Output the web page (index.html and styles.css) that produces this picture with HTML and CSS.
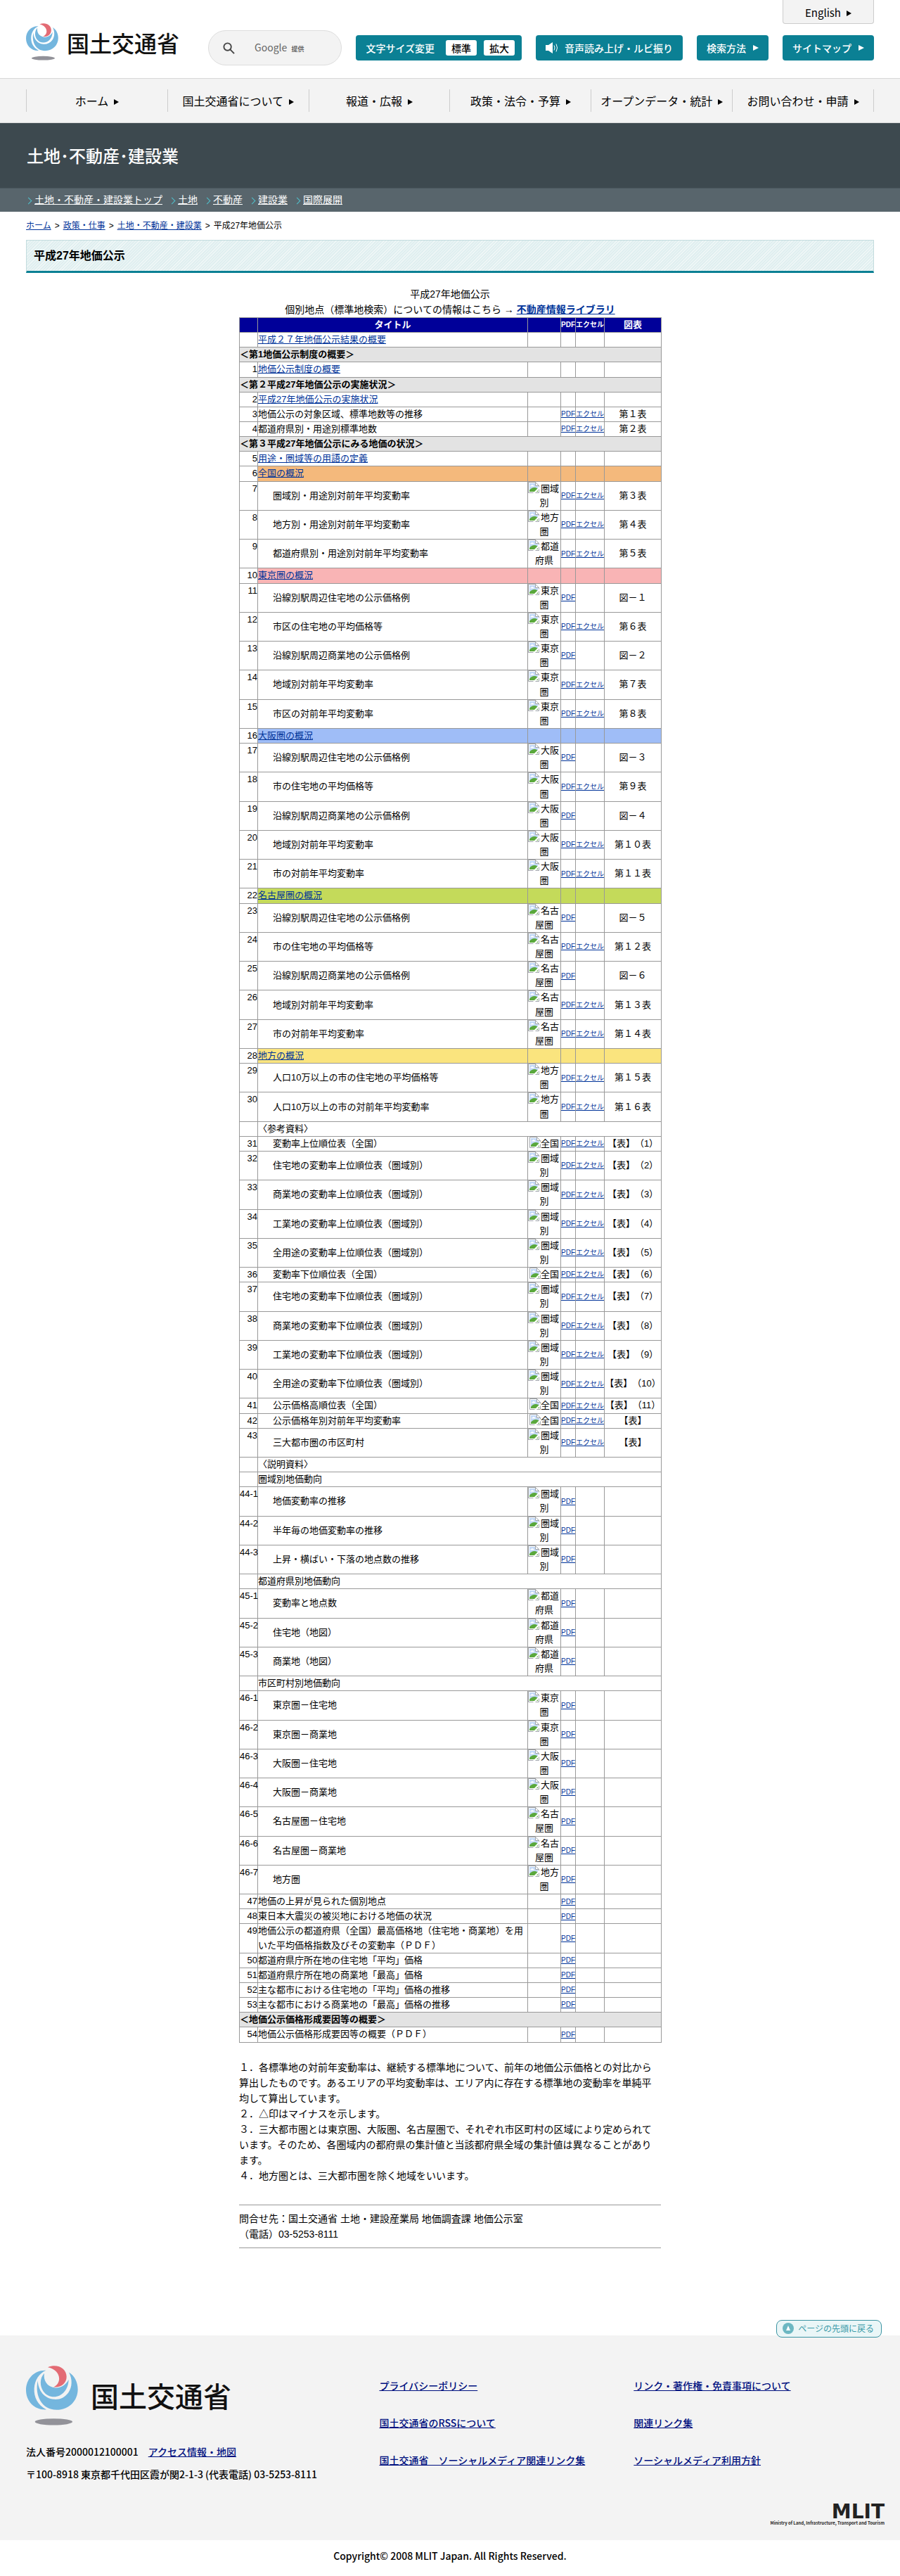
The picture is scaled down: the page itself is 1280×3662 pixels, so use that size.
FILE: index.html
```html
<!DOCTYPE html>
<html lang="ja">
<head>
    <meta charset="UTF-8">
    <meta name="viewport" content="width=device-width, initial-scale=1.0">
    <title>土地・不動産・建設業：平成27年地価公示 - 国土交通省</title>
    <link rel="stylesheet" href="styles.css">
</head>
<body>
    <svg class="sprite" aria-hidden="true">
        <symbol id="mark" viewBox="25 22 222 254">
            <path fill="#74b6de" d="M110 42C58 40 25 80 25 126C25 174 62 212 112 209C74 188 58 155 60 118C62 84 80 55 110 42Z"/>
            <path fill="#74b6de" d="M75 86C62 150 92 209 155 210C210 210 246 170 246 122C246 92 232 64 208 50C224 80 222 112 206 136C190 158 168 167 144 165C104 161 78 130 75 86Z"/>
            <path fill="#74b6de" d="M103 54C82 76 84 110 99 131C115 154 144 160 168 149C192 138 206 112 207 81C194 106 172 118 149 116C114 112 98 84 103 54Z"/>
            <path fill="#e36b74" d="M118 28C158 12 198 32 198 69C198 98 174 116 142 113C182 94 172 38 118 28Z"/>
            <ellipse fill="#929299" cx="143" cy="261" rx="80" ry="14"/>
        </symbol>
        <symbol id="noimage" viewBox="0 0 16 16">
            <path fill="#fff" stroke="#a0a5aa" d="M.5 .5h10l5 5v10H.5z"/>
            <path fill="#c3d9f7" d="M2 2h8v4h4v8H2z"/>
            <path fill="#fff" d="M3 6.500q0-1.500 1.500-1.500q1-1.800 2.500-.5q1.700 0 1.500 2z"/>
            <path fill="#5aa83c" d="M2 14v-2q3-4 7-4q3 0 5 2v4z"/>
            <path fill="#fff" stroke="#a0a5aa" d="M10.500.5v5h5z"/>
            <path fill="#fff" d="M7 16l9-9v3l-6 6z"/>
        </symbol>
    </svg>

    <header class="header">
        <a class="logo" href="#"><svg class="logo-mark" aria-hidden="true"><use href="#mark"/></svg><span>国土交通省</span></a>
        <form class="search" role="search">
            <svg class="search-icon" viewBox="0 0 18 18" aria-hidden="true"><circle cx="7" cy="7" r="5.500"/><path d="M11 11l6 6"/></svg>
            <label for="q">Google <small>提供</small></label>
            <input type="text" id="q" name="q">
        </form>
        <div class="header-right">
            <a class="english" href="#">English<i class="arrow"></i></a>
            <div class="tools">
                <div class="tool font-size">文字サイズ変更
                    <span class="sizes"><button type="button">標準</button><button type="button">拡大</button></span>
                </div>
                <a class="tool" href="#"><svg class="speaker" viewBox="0 0 18 16" aria-hidden="true"><path fill="#fff" d="M0 4h4l6-4v16l-6-4H0z"/><path fill="none" stroke="#fff" d="M12 4.500q2 3.500 0 7M15 2.500q3 5.500 0 11"/></svg>音声読み上げ・ルビ振り</a>
                <a class="tool" href="#">検索方法<i class="arrow"></i></a>
                <a class="tool" href="#">サイトマップ<i class="arrow"></i></a>
            </div>
        </div>
    </header>

    <nav class="gnav">
        <ul>
            <li><a href="#">ホーム<i class="arrow"></i></a></li>
            <li><a href="#">国土交通省について<i class="arrow"></i></a></li>
            <li><a href="#">報道・広報<i class="arrow"></i></a></li>
            <li><a href="#">政策・法令・予算<i class="arrow"></i></a></li>
            <li><a href="#">オープンデータ・統計<i class="arrow"></i></a></li>
            <li><a href="#">お問い合わせ・申請<i class="arrow"></i></a></li>
        </ul>
    </nav>

    <div class="section-title">土地･不動産･建設業</div>
    <ul class="section-nav">
        <li><a href="#">土地・不動産・建設業トップ</a></li>
        <li><a href="#">土地</a></li>
        <li><a href="#">不動産</a></li>
        <li><a href="#">建設業</a></li>
        <li><a href="#">国際展開</a></li>
    </ul>

    <p class="breadcrumb"><a href="#">ホーム</a><span>&gt;</span><a href="#">政策・仕事</a><span>&gt;</span><a href="#">土地・不動産・建設業</a><span>&gt;</span>平成27年地価公示</p>
    <h1 class="page-title">平成27年地価公示</h1>

    <main class="content">
        <p class="lead">平成27年地価公示<br>個別地点（標準地検索）についての情報はこちら → <a href="#"><b>不動産情報ライブラリ</b></a></p>
        <table class="list">
            <colgroup>
                <col class="col-no"><col class="col-title"><col class="col-area"><col class="col-pdf"><col class="col-xls"><col class="col-fig">
            </colgroup>
            <thead>
                <tr><th></th><th>タイトル</th><th></th><th class="file">PDF</th><th class="file">エクセル</th><th>図表</th></tr>
            </thead>
            <tbody id="rows"></tbody>
        </table>

        <p class="notes">１．各標準地の対前年変動率は、継続する標準地について、前年の地価公示価格との対比から算出したものです。あるエリアの平均変動率は、エリア内に存在する標準地の変動率を単純平均して算出しています。<br>
        ２．△印はマイナスを示します。<br>
        ３．三大都市圏とは東京圏、大阪圏、名古屋圏で、それぞれ市区町村の区域により定められています。そのため、各圏域内の都府県の集計値と当該都府県全域の集計値は異なることがあります。<br>
        ４．地方圏とは、三大都市圏を除く地域をいいます。</p>

        <p class="contact">問合せ先：国土交通省 土地・建設産業局 地価調査課 地価公示室<br>（電話）03-5253-8111</p>
    </main>

    <div class="pagetop"><a href="#"><svg viewBox="0 0 16 16" aria-hidden="true"><circle cx="8" cy="8" r="8" fill="#6cb7c2"/><path fill="#fff" d="M8 4l3 7H5z"/></svg>ページの先頭に戻る</a></div>

    <footer class="footer">
        <div class="footer-cols">
            <div>
                <a class="logo footer-logo" href="#"><svg class="logo-mark" aria-hidden="true"><use href="#mark"/></svg><span>国土交通省</span></a>
                <p>法人番号2000012100001　<a href="#">アクセス情報・地図</a></p>
                <p>〒100-8918 東京都千代田区霞が関2-1-3 (代表電話) 03-5253-8111</p>
            </div>
            <ul>
                <li><a href="#">プライバシーポリシー</a></li>
                <li><a href="#">国土交通省のRSSについて</a></li>
                <li><a href="#">国土交通省　ソーシャルメディア関連リンク集</a></li>
            </ul>
            <ul>
                <li><a href="#">リンク・著作権・免責事項について</a></li>
                <li><a href="#">関連リンク集</a></li>
                <li><a href="#">ソーシャルメディア利用方針</a></li>
            </ul>
        </div>
        <div class="mlit"><b>MLIT</b><small>Ministry of Land, Infrastructure, Transport and Tourism</small></div>
    </footer>
    <p class="copyright">Copyright© 2008 MLIT Japan. All Rights Reserved.</p>

    <script src="rows.js"></script>
</body>
</html>
```
FILE: styles.css
```css
* {
    box-sizing: border-box;
}
body {
    margin: 0;
    font-family: "Noto Sans CJK JP", sans-serif;
    font-size: 14px;
    line-height: 22px;
    text-spacing-trim: space-all;
    color: #000;
    background-color: #fff;
}
p, ul, h1 {
    margin: 0;
    padding: 0;
}
ul {
    list-style: none;
}
.sprite {
    display: none;
}
.arrow {
    display: inline-block;
    border-left: 7px solid currentColor;
    border-top: 4px solid transparent;
    border-bottom: 4px solid transparent;
    margin-left: 8px;
    vertical-align: 1px;
}

/* ヘッダー */
.header {
    display: flex;
    align-items: flex-start;
    padding: 0 37px 18px;
}
.logo {
    display: flex;
    align-items: center;
    gap: 12px;
    margin-top: 33px;
    font-size: 32px;
    line-height: 48px;
    font-weight: 500;
    color: #111;
    text-decoration: none;
    white-space: nowrap;
}
.logo-mark {
    width: 46px;
    height: 53px;
}
.search {
    display: flex;
    align-items: center;
    width: 190px;
    height: 50px;
    margin: 43px 0 0 41px;
    padding: 0 20px;
    border: 1px solid #ddd;
    border-radius: 25px;
    background: #f3f3f3;
}
.search-icon {
    flex: none;
    width: 17px;
    height: 17px;
    margin-right: 28px;
    fill: none;
    stroke: #444;
    stroke-width: 2;
}
.search label {
    color: #666;
    white-space: nowrap;
}
.search small {
    margin-left: 3px;
    font-size: 9px;
    font-weight: bold;
}
.search input {
    flex: 1;
    min-width: 0;
    padding: 0;
    border: none;
    background: transparent;
}
.header-right {
    display: flex;
    flex-direction: column;
    align-items: flex-end;
    gap: 16px;
    margin-left: auto;
}
.english {
    width: 130px;
    height: 34px;
    padding-top: 7px;
    border: 1px solid #ccc;
    border-top: none;
    border-radius: 0 0 4px 4px;
    background: #f3f3f3;
    font-size: 15px;
    text-align: center;
    color: #000;
    text-decoration: none;
}
.tools {
    display: flex;
    gap: 20px;
}
.tool {
    display: flex;
    align-items: center;
    height: 36px;
    padding: 0 14px;
    border-radius: 4px;
    background: #0b8094;
    font-weight: 500;
    color: #fff;
    text-decoration: none;
    white-space: nowrap;
}
.tool .arrow {
    margin-left: 10px;
    border-left-width: 8px;
}
.font-size {
    padding-right: 10px;
}
.sizes {
    display: flex;
    gap: 10px;
    margin-left: 16px;
}
.sizes button {
    width: 44px;
    height: 22px;
    padding: 0;
    border: none;
    border-radius: 3px;
    background: #fff;
    font: inherit;
    color: #000;
}
.speaker {
    width: 18px;
    height: 16px;
    margin-right: 9px;
}

/* グローバルナビ */
.gnav {
    padding: 15px 37px;
    border-top: 1px solid #d8d8d8;
    border-bottom: 1px solid #d8d8d8;
    background: #f3f3f3;
}
.gnav ul {
    display: flex;
    border-right: 1px solid #ccc;
}
.gnav li {
    flex: 1;
    border-left: 1px solid #ccc;
    text-align: center;
    line-height: 32px;
    font-size: 16px;
}
.gnav a {
    color: #000;
    text-decoration: none;
    white-space: nowrap;
}

.section-title {
    padding: 0 38px;
    background: #3d494f;
    color: #fff;
    font-size: 24px;
    font-weight: 500;
    line-height: 92px;
}
.section-nav {
    display: flex;
    gap: 10px;
    padding: 0 37px;
    border-top: 1px solid #4a575d;
    background: #58656c;
    line-height: 33px;
}
.section-nav li::before {
    content: "";
    display: inline-block;
    width: 6px;
    height: 6px;
    margin-right: 5px;
    border-top: 1px solid #4fc0cc;
    border-right: 1px solid #4fc0cc;
    transform: rotate(45deg);
}
.section-nav a {
    color: #fff;
}
.section-nav,
.breadcrumb,
.page-title,
.content {
    font-family: "Liberation Sans", "Noto Sans CJK JP", sans-serif;
}
.breadcrumb {
    margin: 0 37px;
    padding: 9px 0;
    font-size: 12px;
}
.breadcrumb span {
    margin: 0 5px;
}
.breadcrumb a,
.content a {
    color: #003399;
}
.page-title {
    margin: 0 37px;
    padding: 11px 10px 10px;
    border: 1px solid #c3dcde;
    border-bottom: 3px solid #0b8094;
    background: repeating-linear-gradient(135deg, #e0eff0 0, #e0eff0 2px, #f0f7f7 2px, #f0f7f7 3px);
    font-size: 16px;
    font-weight: bold;
}

/* 本文 */
.content {
    width: 600px;
    max-width: 100%;
    margin: 0 auto;
    padding: 19px 0 102px;
}
.lead {
    text-align: center;
}
.list {
    width: 100%;
    table-layout: fixed;
    border-collapse: collapse;
    font-size: 13px;
    line-height: 1.55;
}
.list th,
.list td {
    padding: 0;
    border: 1px solid #999;
}
.list th {
    background: #000099;
    color: #fff;
}
.col-no { width: 26px; }
.col-title { width: 384px; }
.col-area { width: 47px; }
.col-pdf { width: 21px; }
.col-xls { width: 41px; }
.col-fig { width: 81px; }
.list .no {
    text-align: right;
    vertical-align: top;
    white-space: nowrap;
}
.list .sub {
    padding-left: 21px;
}
.list .center {
    text-align: center;
    white-space: nowrap;
}
.list .file {
    font-size: 10px;
    text-align: center;
    white-space: nowrap;
}
.list .group {
    background: #e3e3e3;
    font-weight: bold;
}
/* 画像の代替表示 */
.area {
    display: inline-block;
    vertical-align: top;
    text-align: center;
}
.area svg {
    float: left;
    width: 16px;
    height: 16px;
}
.area-cell {
    text-align: center;
}
.zenkoku td { background: #f4b97c; }
.tokyo td { background: #f9b4b5; }
.osaka td { background: #9fbdf7; }
.nagoya td { background: #c4da5a; }
.chihou td { background: #fae47e; }
.list tr .no {
    background: #fff;
}
.notes {
    margin-top: 24px;
}
.contact {
    margin-top: 30px;
    padding: 8px 0;
    border-top: 1px solid #999;
    border-bottom: 1px solid #999;
}

/* フッター */
.pagetop {
    position: relative;
    display: flex;
    justify-content: flex-end;
    margin-bottom: -3px;
    padding-right: 26px;
}
.pagetop a {
    display: flex;
    align-items: center;
    gap: 6px;
    height: 25px;
    padding: 0 10px 0 8px;
    border: 1px solid #3a93a2;
    border-radius: 8px;
    background: #eaf6f7;
    font-size: 12px;
    color: #3a9aa8;
    text-decoration: none;
}
.pagetop svg {
    width: 16px;
    height: 16px;
}
.footer {
    padding: 43px 22px 19px 37px;
    background: #f3f3f3;
    font-weight: 500;
}
.footer-cols {
    display: grid;
    grid-template-columns: 5fr 3.6fr 3.4fr;
    margin-right: 15px;
}
.footer a:not(.logo) {
    color: #00107f;
}
.footer p {
    margin-bottom: 10px;
    white-space: nowrap;
}
.footer-logo {
    gap: 18px;
    margin: 0 0 26px;
    font-size: 40px;
}
.footer-logo .logo-mark {
    width: 74px;
    height: 85px;
}
.footer ul {
    padding-top: 17px;
}
.footer li {
    margin-bottom: 31px;
}
.mlit {
    display: flex;
    flex-direction: column;
    align-items: flex-end;
    margin-top: 21px;
    color: #222;
}
.mlit b {
    font-family: "DejaVu Sans", sans-serif;
    font-size: 28px;
    line-height: 22px;
}
.mlit small {
    font-size: 6px;
    line-height: 10px;
    font-weight: bold;
}
.copyright {
    padding: 11px 0 18px;
    text-align: center;
    font-weight: 500;
}
```
FILE: rows.js
```js
// [番号, タイトル, 圏域, ファイル(p=PDF, x=エクセル), 図表, クラス]
const rows = [
    ["", "@平成２７年地価公示結果の概要"],
    ["#", "＜第1地価公示制度の概要＞"],
    ["1", "@地価公示制度の概要"],
    ["#", "＜第２平成27年地価公示の実施状況＞"],
    ["2", "@平成27年地価公示の実施状況"],
    ["3", "地価公示の対象区域、標準地数等の推移", "", "px", "第１表"],
    ["4", "都道府県別・用途別標準地数", "", "px", "第２表"],
    ["#", "＜第３平成27年地価公示にみる地価の状況＞"],
    ["5", "@用途・圏域等の用語の定義"],
    ["6", "@全国の概況", "", "", "", "zenkoku"],
    ["7", "圏域別・用途別対前年平均変動率", "圏域別", "px", "第３表"],
    ["8", "地方別・用途別対前年平均変動率", "地方圏", "px", "第４表"],
    ["9", "都道府県別・用途別対前年平均変動率", "都道府県", "px", "第５表"],
    ["10", "@東京圏の概況", "", "", "", "tokyo"],
    ["11", "沿線別駅周辺住宅地の公示価格例", "東京圏", "p", "図－１"],
    ["12", "市区の住宅地の平均価格等", "東京圏", "px", "第６表"],
    ["13", "沿線別駅周辺商業地の公示価格例", "東京圏", "p", "図－２"],
    ["14", "地域別対前年平均変動率", "東京圏", "px", "第７表"],
    ["15", "市区の対前年平均変動率", "東京圏", "px", "第８表"],
    ["16", "@大阪圏の概況", "", "", "", "osaka"],
    ["17", "沿線別駅周辺住宅地の公示価格例", "大阪圏", "p", "図－３"],
    ["18", "市の住宅地の平均価格等", "大阪圏", "px", "第９表"],
    ["19", "沿線別駅周辺商業地の公示価格例", "大阪圏", "p", "図－４"],
    ["20", "地域別対前年平均変動率", "大阪圏", "px", "第１０表"],
    ["21", "市の対前年平均変動率", "大阪圏", "px", "第１１表"],
    ["22", "@名古屋圏の概況", "", "", "", "nagoya"],
    ["23", "沿線別駅周辺住宅地の公示価格例", "名古屋圏", "p", "図－５"],
    ["24", "市の住宅地の平均価格等", "名古屋圏", "px", "第１２表"],
    ["25", "沿線別駅周辺商業地の公示価格例", "名古屋圏", "p", "図－６"],
    ["26", "地域別対前年平均変動率", "名古屋圏", "px", "第１３表"],
    ["27", "市の対前年平均変動率", "名古屋圏", "px", "第１４表"],
    ["28", "@地方の概況", "", "", "", "chihou"],
    ["29", "人口10万以上の市の住宅地の平均価格等", "地方圏", "px", "第１５表"],
    ["30", "人口10万以上の市の対前年平均変動率", "地方圏", "px", "第１６表"],
    ["-", "〈参考資料〉"],
    ["31", "変動率上位順位表（全国）", "全国", "px", "【表】（1）"],
    ["32", "住宅地の変動率上位順位表（圏域別）", "圏域別", "px", "【表】（2）"],
    ["33", "商業地の変動率上位順位表（圏域別）", "圏域別", "px", "【表】（3）"],
    ["34", "工業地の変動率上位順位表（圏域別）", "圏域別", "px", "【表】（4）"],
    ["35", "全用途の変動率上位順位表（圏域別）", "圏域別", "px", "【表】（5）"],
    ["36", "変動率下位順位表（全国）", "全国", "px", "【表】（6）"],
    ["37", "住宅地の変動率下位順位表（圏域別）", "圏域別", "px", "【表】（7）"],
    ["38", "商業地の変動率下位順位表（圏域別）", "圏域別", "px", "【表】（8）"],
    ["39", "工業地の変動率下位順位表（圏域別）", "圏域別", "px", "【表】（9）"],
    ["40", "全用途の変動率下位順位表（圏域別）", "圏域別", "px", "【表】（10）"],
    ["41", "公示価格高順位表（全国）", "全国", "px", "【表】（11）"],
    ["42", "公示価格年別対前年平均変動率", "全国", "px", "【表】"],
    ["43", "三大都市圏の市区町村", "圏域別", "px", "【表】"],
    ["-", "〈説明資料〉"],
    ["-", "圏域別地価動向"],
    ["44-1", "地価変動率の推移", "圏域別", "p"],
    ["44-2", "半年毎の地価変動率の推移", "圏域別", "p"],
    ["44-3", "上昇・横ばい・下落の地点数の推移", "圏域別", "p"],
    ["-", "都道府県別地価動向"],
    ["45-1", "変動率と地点数", "都道府県", "p"],
    ["45-2", "住宅地（地図）", "都道府県", "p"],
    ["45-3", "商業地（地図）", "都道府県", "p"],
    ["-", "市区町村別地価動向"],
    ["46-1", "東京圏－住宅地", "東京圏", "p"],
    ["46-2", "東京圏－商業地", "東京圏", "p"],
    ["46-3", "大阪圏－住宅地", "大阪圏", "p"],
    ["46-4", "大阪圏－商業地", "大阪圏", "p"],
    ["46-5", "名古屋圏－住宅地", "名古屋圏", "p"],
    ["46-6", "名古屋圏－商業地", "名古屋圏", "p"],
    ["46-7", "地方圏", "地方圏", "p"],
    ["47", "地価の上昇が見られた個別地点", "", "p"],
    ["48", "東日本大震災の被災地における地価の状況", "", "p"],
    ["49", "地価公示の都道府県（全国）最高価格地（住宅地・商業地）を用いた平均価格指数及びその変動率（ＰＤＦ）", "", "p"],
    ["50", "都道府県庁所在地の住宅地「平均」価格", "", "p"],
    ["51", "都道府県庁所在地の商業地「最高」価格", "", "p"],
    ["52", "主な都市における住宅地の「平均」価格の推移", "", "p"],
    ["53", "主な都市における商業地の「最高」価格の推移", "", "p"],
    ["#", "＜地価公示価格形成要因等の概要＞"],
    ["54", "地価公示価格形成要因等の概要（ＰＤＦ）", "", "p"]
];

document.getElementById("rows").innerHTML = rows.map(([no, title, area = "", files = "", fig = "", cls = ""]) => {
    if (no === "#") {
        return `<tr><td class="group" colspan="6">${title}</td></tr>`;
    }
    if (no === "-") {
        return `<tr><td class="no"></td><td colspan="5">${title}</td></tr>`;
    }
    const name = title.startsWith("@") ? `<a href="#">${title.slice(1)}</a>` : title;
    const icon = area ? `<span class="area"><svg aria-hidden="true"><use href="#noimage"/></svg>${area}</span>` : "";
    const pdf = files.includes("p") ? '<a href="#">PDF</a>' : "";
    const xls = files.includes("x") ? '<a href="#">エクセル</a>' : "";
    return `<tr class="${cls}"><td class="no">${no}</td><td class="${area ? "sub" : ""}">${name}</td>
        <td class="area-cell">${icon}</td><td class="file">${pdf}</td><td class="file">${xls}</td><td class="center">${fig}</td></tr>`;
}).join("");
```
